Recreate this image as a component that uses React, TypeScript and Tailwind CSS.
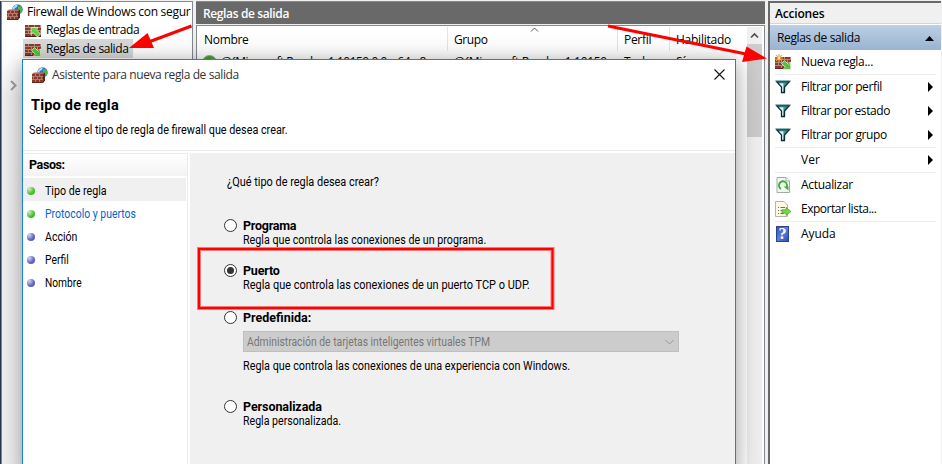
import React from "react";

const segoe = "font-['Open_Sans','Noto_Sans',sans-serif]";
const dlg = "font-['Roboto','Liberation_Sans',sans-serif]";

function Bricks() {
  return (
    <g>
      <rect width="16" height="12" fill="#b28b7c" />
      <g fill="#8a3a2b">
        <rect x="0" y="0" width="3" height="2" /><rect x="4" y="0" width="5" height="2" /><rect x="10" y="0" width="5" height="2" />
        <rect x="0" y="3" width="6" height="2" /><rect x="7" y="3" width="5" height="2" /><rect x="13" y="3" width="3" height="2" />
        <rect x="0" y="6" width="3" height="2" /><rect x="4" y="6" width="5" height="2" /><rect x="10" y="6" width="5" height="2" />
        <rect x="0" y="9" width="6" height="2" /><rect x="7" y="9" width="5" height="2" /><rect x="13" y="9" width="3" height="2" />
      </g>
      <rect y="11" width="16" height="1" fill="#5d261e" />
    </g>
  );
}

function FirewallIcon() {
  return (
    <svg width="16" height="16" viewBox="0 0 16 16" className="shrink-0">
      <circle cx="10.500" cy="5.400" r="5.200" fill="#2477c4" />
      <path d="M6 3.500Q8 .5 11 .6Q10.500 3 8.500 3.800T8 7Q5.500 6.500 6 3.500Z" fill="#b6e0fa" />
      <path d="M11 2.500L14 2.200Q16 5 14.500 8L12 9.500L11 6Z" fill="#58b43a" />
      <path d="M0 7L2 5.500H12L11 7Z" fill="#b06a58" />
      <path d="M11 7L13 5.500V13.500L11 16Z" fill="#5d261e" />
      <rect x="0" y="7" width="11" height="9" fill="#8a3a2b" />
      <path d="M0 9.500H11M0 12.500H11M3.500 7V9M7.500 7V9M1.500 10V12M5.500 10V12M9.500 10V12M3.500 13V16M7.500 13V16" stroke="#b27c6c" />
      <path d="M0 15.500H11" stroke="#5d261e" />
    </svg>
  );
}

function RuleIcon({ kind }: { kind: "in" | "out" | "new" }) {
  return (
    <svg width="17" height="16" viewBox="0 0 17 16" className="shrink-0">
      <g transform="translate(0 3)"><Bricks /></g>
      {kind === "in" ? (
        <path d="M6 5.500H13L11 7.500L15.500 12L12.500 15L8 10.500L6 12.500Z" fill="#62cf44" stroke="#e2f7da" strokeWidth=".8" />
      ) : (
        <path d="M15.500 15.500H8L10.200 13.200L6.500 9.500L9.500 6.500L13.300 10.200L15.500 8Z" fill="#58c23c" stroke="#e2f7da" strokeWidth=".8" />
      )}
      {kind === "new" && (
        <g>
          <path d="M4 0V8M0 4H8M1.200 1.200L6.800 6.800M6.800 1.200L1.200 6.800" stroke="#eda733" strokeWidth="1.200" />
          <circle cx="4" cy="4" r="1.400" fill="#ffe9a8" />
        </g>
      )}
    </svg>
  );
}

function FunnelIcon() {
  return (
    <svg width="16" height="16" viewBox="0 0 16 16" className="shrink-0">
      <path d="M1.500 2.500H14.500L9.500 8V13.500H6.500V8Z" fill="#2d9a9a" stroke="#082a30" strokeWidth="1.300" />
      <path d="M4 4.200H8.500L8.200 12.800H7.200V7.700Z" fill="#dceeee" />
      <path d="M1 2.500H15" stroke="#14606a" strokeWidth="1.400" />
    </svg>
  );
}

function RefreshIcon() {
  return (
    <svg width="16" height="16" viewBox="0 0 16 16" className="shrink-0">
      <path d="M2 .5H11L14.500 4V15.500H2Z" fill="#f4f6f4" stroke="#a5aaa5" />
      <path d="M11 .5V4H14.500" fill="#fff" stroke="#a5aaa5" />
      <path d="M6 11.800A4 4 0 1 1 11.600 10" fill="none" stroke="#3fae35" strokeWidth="1.900" />
      <path d="M8.600 9.500H13.500V13.500Z" fill="#3fae35" />
    </svg>
  );
}

function ExportIcon() {
  return (
    <svg width="17" height="16" viewBox="0 0 17 16" className="shrink-0">
      <path d="M.5 .5H9L12.500 4V15.500H.5Z" fill="#fcf8e4" stroke="#b9b49d" />
      <path d="M3 6.500H4M3 9.500H4M3 12.500H4M5.500 6.500H10M5.500 9.500H8M5.500 12.500H9" stroke="#6a6a75" />
      <path d="M7 8.800H11V6.300L16 10.500L11 14.500V12.200H7Z" fill="#76d541" stroke="#4ea827" strokeWidth=".7" />
    </svg>
  );
}

function HelpIcon() {
  return (
    <span className="ml-px flex h-4 w-[13px] shrink-0 items-center justify-center border border-[#2c4390] bg-linear-to-br from-[#2f50b8] via-[#5b80dc] to-[#2f4fae] font-['Liberation_Serif',serif] text-[16px] leading-none font-bold text-white">
      ?
    </span>
  );
}

function Tree() {
  return (
    <div className={`flex w-[191px] shrink-0 flex-col border-t border-r border-[#828790] bg-white text-[12px] whitespace-nowrap text-black ${segoe}`}>
      <div className="mt-px flex h-[18px] items-center pl-[5px]">
        <FirewallIcon />
        <span className="ml-[4px] tracking-[-0.300px]">Firewall de Windows con segur</span>
      </div>
      <div className="flex h-[18px] items-center pl-[23px]">
        <RuleIcon kind="in" />
        <span className="ml-[4px] tracking-[-0.420px]">Reglas de entrada</span>
      </div>
      <div className="ml-[21px] flex h-[19px] w-[110px] items-center bg-[#d9d9d9] pl-[2px]">
        <RuleIcon kind="out" />
        <span className="ml-[4px] tracking-[-0.400px]">Reglas de salida</span>
      </div>
      <div className="grow bg-linear-to-b from-white to-[#f2f2f2] to-[40px] pt-[22px] pl-[8px]">
        <svg width="7" height="11"><path d="M1 1L5.500 5.500L1 10" fill="none" stroke="#a0a0a0" strokeWidth="2" /></svg>
      </div>
    </div>
  );
}

function RuleList() {
  return (
    <div className={`flex w-[569px] shrink-0 flex-col text-[12px] text-black ${segoe}`}>
      <div className="mb-px flex h-[23px] items-center border-t border-[#828790] bg-[#696969] pt-px pl-[7px] font-semibold tracking-[-0.370px] text-white">Reglas de salida</div>
      <div className="flex min-h-0 grow border border-b-0 border-[#828790] bg-white">
        <div className="flex w-[550px] flex-col whitespace-nowrap">
          <div className="mt-px flex h-6 items-center">
            <div className="h-full w-[251px] border-r border-[#e5e5e5] pt-[4px] pl-[7px] tracking-[-0.300px]">Nombre</div>
            <div className="relative h-full w-[170px] border-r border-[#e5e5e5] pt-[4px] pl-[6px] tracking-[-0.400px]">
              Grupo
              <svg className="absolute top-0 left-[82px]" width="9" height="5"><path d="M1 4.500L4.500 1L8 4.500" fill="none" stroke="#555" /></svg>
            </div>
            <div className="h-full w-[52px] border-r border-[#e5e5e5] pt-[4px] pl-[6px] tracking-[-0.300px]">Perfil</div>
            <div className="h-full pt-[4px] pl-[6px] tracking-[-0.250px]">Habilitado</div>
          </div>
          <div className="mt-[2px] flex h-[18px] items-center">
            <div className="flex w-[251px] items-center pl-[5px] tracking-[-0.500px]">
              <svg width="15" height="15" viewBox="0 0 15 15" className="mr-[4px]"><circle cx="7.500" cy="7.500" r="7" fill="#3da52b" stroke="#99aaa0" /><path d="M4 7.500L7 11L11 4" fill="none" stroke="#fff" strokeWidth="2" /></svg>
              {"@{Microsoft.Reader_1.10159.0.0_x64__8"}
            </div>
            <div className="w-[170px] pl-[6px] tracking-[-0.300px]">{"@{Microsoft.Reader_1.10159"}</div>
            <div className="w-[52px] pl-[6px]">Todo</div>
            <div className="pl-[6px]">Sí</div>
          </div>
        </div>
        <div className="mt-px flex w-[15px] flex-col bg-[#f0f0f0]">
          <div className="flex h-[17px] items-center justify-center"><svg width="9" height="7"><path d="M1 5.500L4.500 2L8 5.500" fill="none" stroke="#505050" strokeWidth="1.700" /></svg></div>
          <div className="h-[93px] bg-[#cdcdcd]" />
        </div>
      </div>
    </div>
  );
}

type ActionProps = { icon?: React.ReactNode; label: string; sub?: boolean; line?: boolean; fit?: string };

function Action({ icon, label, sub, line, fit = "" }: ActionProps) {
  return (
    <div className={`mr-[5px] ml-[5px] flex shrink-0 items-center ${line ? "h-[25px] border-b border-[#ececec]" : "h-6"}`}>
      <span className="flex w-[26px] items-center">{icon}</span>
      <span className={`grow ${fit}`}>{label}</span>
      {sub && <svg width="5" height="10" className="mr-[3px]"><path d="M0 0L5 5L0 10Z" fill="#000" /></svg>}
    </div>
  );
}

function Actions() {
  return (
    <div className={`flex w-[173px] shrink-0 flex-col border-t-2 border-l-2 border-[#696969] bg-white text-[12px] whitespace-nowrap text-black ${segoe}`}>
      <div className="flex h-[21px] shrink-0 items-center border-b border-[#d5d5d5] bg-[#f0f0f0] pl-[5px] pt-[2px] font-semibold tracking-[-0.200px]">Acciones</div>
      <div className="mt-px flex h-[25px] shrink-0 items-center justify-between bg-linear-to-b from-[#bbcfe5] to-[#99b4d1] pt-px pr-[7px] pl-[7px] tracking-[-0.370px]">
        Reglas de salida
        <svg width="9" height="5"><path d="M0 5L4.500 0L9 5Z" fill="#000" /></svg>
      </div>
      <Action icon={<RuleIcon kind="new" />} label="Nueva regla..." line fit="tracking-[-0.300px]" />
      <Action icon={<FunnelIcon />} label="Filtrar por perfil" sub fit="tracking-[-0.380px]" />
      <Action icon={<FunnelIcon />} label="Filtrar por estado" sub fit="tracking-[-0.430px]" />
      <Action icon={<FunnelIcon />} label="Filtrar por grupo" sub line fit="tracking-[-0.360px]" />
      <Action label="Ver" sub line />
      <Action icon={<RefreshIcon />} label="Actualizar" fit="tracking-[-0.300px]" />
      <Action icon={<ExportIcon />} label="Exportar lista..." line fit="tracking-[-0.480px]" />
      <Action icon={<HelpIcon />} label="Ayuda" fit="tracking-[-0.100px]" />
    </div>
  );
}

const steps = [
  { label: "Tipo de regla", on: true, row: "bg-[#f0f0f0] text-black", fit: "scale-x-[0.890]" },
  { label: "Protocolo y puertos", on: true, row: "text-[#0066cc]", fit: "scale-x-[0.870]" },
  { label: "Acción", on: false, row: "text-black", fit: "scale-x-[0.880]" },
  { label: "Perfil", on: false, row: "text-black", fit: "scale-x-[0.860]" },
  { label: "Nombre", on: false, row: "text-black", fit: "scale-x-[0.850]" },
];

type RadioProps = { title: string; titleFit: string; text?: string; textFit?: string; checked?: boolean };

function Radio({ title, titleFit, text, textFit = "", checked }: RadioProps) {
  return (
    <div className="flex">
      <span className="mr-[6px] flex h-[13px] w-[13px] shrink-0 items-center justify-center rounded-full border border-[#333] bg-white">
        {checked && <span className="h-[7px] w-[7px] rounded-full bg-[#333]" />}
      </span>
      <div className="leading-[14px]">
        <div className={`text-[12.500px] font-bold ${titleFit}`}>{title}</div>
        {text && <div className={`origin-left ${textFit}`}>{text}</div>}
      </div>
    </div>
  );
}

function Wizard() {
  return (
    <div className={`absolute top-[59px] left-[22px] flex h-[420px] w-[714px] flex-col border border-[#1883d7] bg-white text-[12px] whitespace-nowrap text-black shadow-[0_3px_18px_rgba(0,0,0,0.32),0_8px_44px_rgba(0,0,0,0.10)] ${dlg}`}>
      <div className={`flex h-[30px] shrink-0 items-center pr-[10px] pl-[9px] text-[#333] ${segoe}`}>
        <FirewallIcon />
        <span className="ml-[4px] grow tracking-[-0.400px]">Asistente para nueva regla de salida</span>
        <svg width="11" height="11" className="-translate-y-px"><path d="M.5 .5L10.500 10.500M10.500 .5L.5 10.500" stroke="#111" strokeWidth="1.100" /></svg>
      </div>
      <div className="flex h-[61px] shrink-0 flex-col items-start border-b border-[#ececec]">
        <div className="mt-[7px] ml-[8px] text-[14.500px] leading-[18px] font-bold tracking-[0.200px]">Tipo de regla</div>
        <div className="mt-[7px] ml-[6px] origin-left scale-x-[0.900] leading-[16px]">Seleccione el tipo de regla de firewall que desea crear.</div>
      </div>
      <div className="mt-[2px] flex grow">
        <div className="flex w-[165px] shrink-0 flex-col border-t border-r border-[#ececec]">
          <div className="mb-[2px] flex h-[22px] items-center bg-linear-to-b from-white to-[#f3f3f3] pl-[6px] text-[12.500px] font-bold tracking-[-0.400px]">Pasos:</div>
          {steps.map((s) => (
            <div key={s.label} className={`mr-px flex h-[23px] items-center pt-[2px] pl-[4px] ${s.row}`}>
              <span className={`mr-[10px] h-[8px] w-[8px] rounded-full ${s.on ? "bg-radial-[at_30%_25%] from-[#cdeec4] to-[#45bd2b] to-60%" : "bg-radial-[at_30%_25%] from-[#d2d5f2] to-[#5d5fc2] to-60%"}`} />
              <span className={`origin-left ${s.fit}`}>{s.label}</span>
            </div>
          ))}
        </div>
        <div className="ml-[2px] flex grow flex-col items-start bg-[#f0f0f0] pl-[34px]">
          <div className="mt-[21px] ml-[3px] h-[16px] origin-left scale-x-[0.910] leading-[16px]">¿Qué tipo de regla desea crear?</div>
          <div className="mt-[29px] h-[45px]"><Radio title="Programa" titleFit="tracking-[-0.250px]" text="Regla que controla las conexiones de un programa." textFit="scale-x-[0.893]" /></div>
          <div className="h-[47px]"><Radio title="Puerto" titleFit="tracking-[-0.200px]" text="Regla que controla las conexiones de un puerto TCP o UDP." textFit="scale-x-[0.912]" checked /></div>
          <div className="h-[20px]"><Radio title="Predefinida:" titleFit="" /></div>
          <div className="ml-[19px] flex h-[21px] w-[436px] items-center justify-between border border-[#bfbfbf] bg-[#cccccc] pr-[4px] pl-[3px] text-[#777]">
            <span className="origin-left scale-x-[0.863]">Administración de tarjetas inteligentes virtuales TPM</span>
            <svg width="9" height="6"><path d="M.5 1L4.500 5L8.500 1" fill="none" stroke="#999" /></svg>
          </div>
          <div className="mt-[6px] ml-[19px] h-[16px] origin-left scale-x-[0.901] leading-[16px]">Regla que controla las conexiones de una experiencia con Windows.</div>
          <div className="mt-[26px]"><Radio title="Personalizada" titleFit="tracking-[-0.080px]" text="Regla personalizada." textFit="scale-x-[0.883]" /></div>
        </div>
      </div>
    </div>
  );
}

export default function App() {
  return (
    <div className="relative flex h-[464px] w-[942px] overflow-hidden bg-[#f0f0f0] pt-px">
      <div className="w-[2px] shrink-0 border-r border-[#888] bg-[#26364d]" />
      <Tree />
      <div className="w-[3px] shrink-0" />
      <RuleList />
      <div className="w-[3px] shrink-0" />
      <Actions />
      <Wizard />
      <svg className="pointer-events-none absolute inset-0" width="942" height="464">
        <path d="M191.500 26L150 41.500" stroke="#f00" strokeWidth="3" />
        <path d="M129 48L147.500 33L154 48Z" fill="#f00" />
        <path d="M608 26L746 54" stroke="#f00" strokeWidth="3" />
        <path d="M767 58.500L746.500 46.500L742 62Z" fill="#f00" />
        <rect x="199" y="249" width="353.500" height="59" fill="none" stroke="#f00" strokeOpacity=".5" strokeWidth="4" />
        <rect x="199" y="249" width="353.500" height="59" fill="none" stroke="#f00" strokeWidth="2" />
      </svg>
    </div>
  );
}
